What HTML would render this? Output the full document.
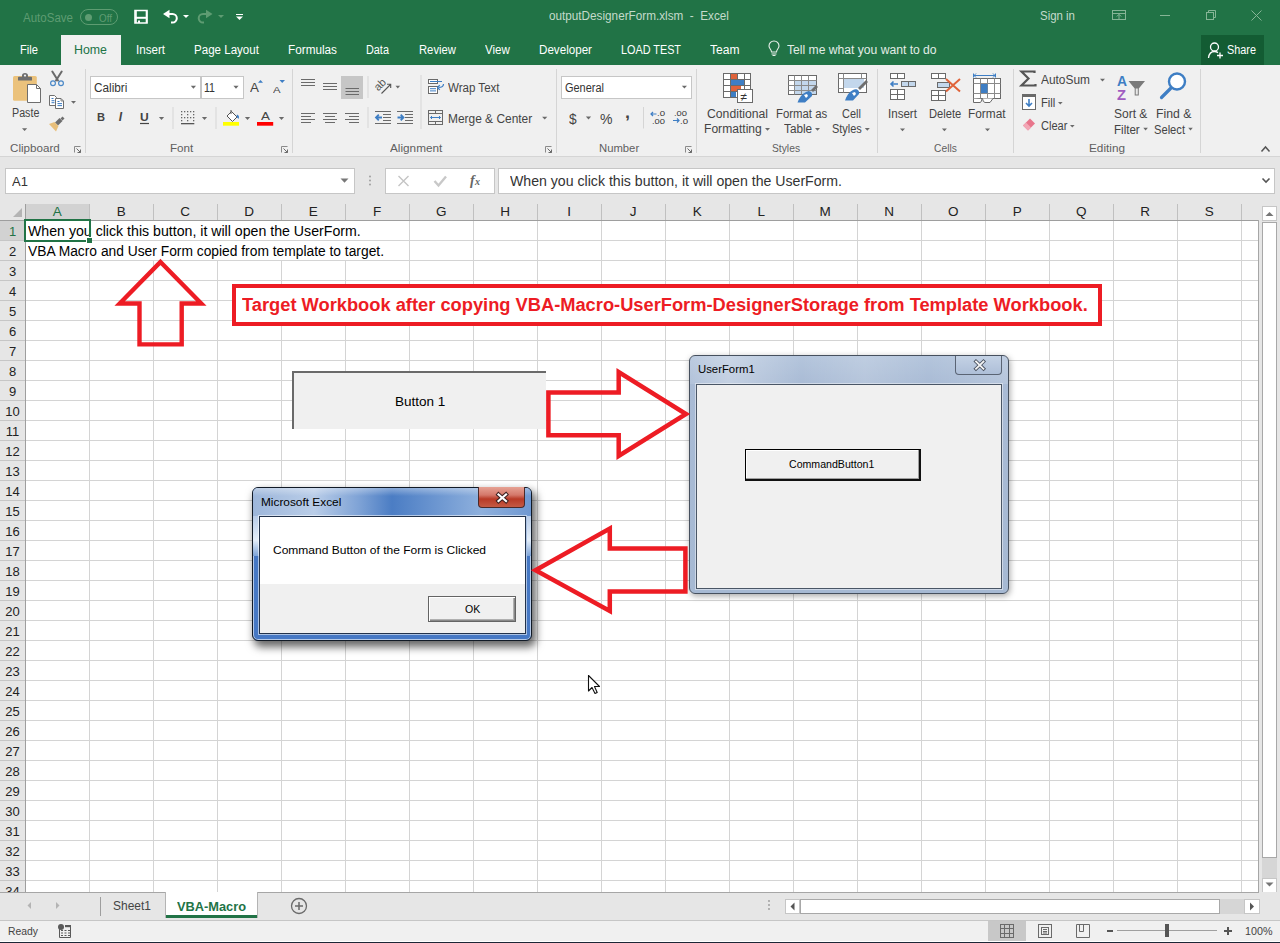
<!DOCTYPE html>
<html><head><meta charset="utf-8"><style>
*{margin:0;padding:0;box-sizing:border-box}
html,body{width:1280px;height:943px;overflow:hidden;background:#fff;font-family:"Liberation Sans",sans-serif;position:relative}
.a{position:absolute}
svg.a{overflow:visible}
.t{position:absolute;white-space:pre;line-height:1}
</style></head><body>
<div class="a" style="left:0px;top:0px;width:1280px;height:65px;background:#217346;"></div>
<div class="a" style="left:0px;top:65px;width:1280px;height:92px;background:#f0f0f0;"></div>
<div class="a" style="left:0px;top:156px;width:1280px;height:1px;background:#d5d5d5;"></div>
<div class="a" style="left:0px;top:157px;width:1280px;height:47px;background:#e6e6e6;"></div>
<div class="t" style="left:23.00px;top:11.84px;font-size:12px;color:#5e9c72;transform:scaleX(0.9601);transform-origin:0 0;">AutoSave</div>
<div class="a" style="left:80px;top:9px;width:38px;height:16px;border:1px solid #5e9c72;border-radius:8px;"></div>
<div class="a" style="left:84.5px;top:13.5px;width:7px;height:7px;background:#5e9c72;border-radius:50%;"></div>
<div class="t" style="left:99.00px;top:12.69px;font-size:11px;color:#5e9c72;transform:scaleX(0.8953);transform-origin:0 0;">Off</div>
<svg class="a" style="left:0px;top:0px;" width="1280" height="35" viewBox="0 0 1280 35">
 <g fill="none" stroke="#fff">
  <path d="M135 10.5 H147 V23 H135 Z" stroke-width="1.6"/>
  <path d="M135 17.8 H147" stroke-width="2"/>
  <path d="M136 11 V23 M146.5 11 V23" stroke-width="1.6"/>
  <path d="M139 20.5 V23" stroke-width="2"/>
  <path d="M168.5 14 H172.5 A4.3 4.3 0 0 1 172.5 22.6 H171" stroke-width="2"/>
 </g>
 <path d="M163 14 L169.5 9.8 L169.5 18.2 Z" fill="#fff"/>
 <path d="M183 15 H189 L186 18 Z" fill="#fff"/>
 <g fill="none" stroke="#5e9c72" stroke-width="2">
  <path d="M207 14 H203 A4.3 4.3 0 0 0 203 22.6 H204"/>
 </g>
 <path d="M212.5 14 L206 9.8 L206 18.2 Z" fill="#5e9c72"/>
 <path d="M218 15 H224 L221 18 Z" fill="#5e9c72"/>
 <path d="M236 14.5 H243" stroke="#fff" stroke-width="1"/>
 <path d="M236 16.5 H243 L239.5 20 Z" fill="#fff"/>
 <g fill="none" stroke="#86b596" stroke-width="1">
  <rect x="1112.5" y="10.5" width="13" height="9"/>
  <path d="M1112.5 13.5 H1125.5 M1119 19 V14.5 M1116.8 16.5 L1119 14.3 L1121.2 16.5"/>
  <path d="M1160 15.5 H1170"/>
  <rect x="1206.5" y="12.5" width="7" height="7"/>
  <path d="M1208.5 12.5 V10.5 H1215.5 V17.5 H1213.5"/>
  <path d="M1251.5 10.5 L1261.5 20.5 M1261.5 10.5 L1251.5 20.5"/>
 </g></svg>
<div class="t" style="left:549.00px;top:9.84px;font-size:12px;color:#c4dbcb;transform:scaleX(0.9778);transform-origin:0 0;">outputDesignerForm.xlsm  -  Excel</div>
<div class="t" style="left:1040.00px;top:10.14px;font-size:12px;color:#c4dbcb;transform:scaleX(0.9532);transform-origin:0 0;">Sign in</div>
<div class="a" style="left:61px;top:35px;width:60px;height:30px;background:#f0f0f0;"></div>
<div class="t" style="left:20.00px;top:44.24px;font-size:12px;color:#fff;transform:scaleX(0.9317);transform-origin:0 0;">File</div>
<div class="t" style="left:74.00px;top:44.24px;font-size:12px;color:#217346;transform:scaleX(1.0300);transform-origin:0 0;">Home</div>
<div class="t" style="left:136.00px;top:44.24px;font-size:12px;color:#fff;transform:scaleX(0.9667);transform-origin:0 0;">Insert</div>
<div class="t" style="left:194.00px;top:44.24px;font-size:12px;color:#fff;transform:scaleX(0.9638);transform-origin:0 0;">Page Layout</div>
<div class="t" style="left:288.00px;top:44.24px;font-size:12px;color:#fff;transform:scaleX(0.9792);transform-origin:0 0;">Formulas</div>
<div class="t" style="left:366.00px;top:44.24px;font-size:12px;color:#fff;transform:scaleX(0.9041);transform-origin:0 0;">Data</div>
<div class="t" style="left:419.00px;top:44.24px;font-size:12px;color:#fff;transform:scaleX(0.9372);transform-origin:0 0;">Review</div>
<div class="t" style="left:485.00px;top:44.24px;font-size:12px;color:#fff;transform:scaleX(0.9645);transform-origin:0 0;">View</div>
<div class="t" style="left:539.00px;top:44.24px;font-size:12px;color:#fff;transform:scaleX(0.9686);transform-origin:0 0;">Developer</div>
<div class="t" style="left:621.00px;top:44.24px;font-size:12px;color:#fff;transform:scaleX(0.9025);transform-origin:0 0;">LOAD TEST</div>
<div class="t" style="left:710.00px;top:44.24px;font-size:12px;color:#fff;transform:scaleX(1.0068);transform-origin:0 0;">Team</div>
<svg class="a" style="left:766px;top:40px;" width="16" height="18" viewBox="766 40 16 18"><g fill="none" stroke="#e8f0ea" stroke-width="1.1"><path d="M771.5 52 C771.5 49.5 769 48.5 769 46 A5 5 0 0 1 779 46 C779 48.5 776.5 49.5 776.5 52 Z"/><path d="M771.5 54 H776.5 M772.5 55.5 H775.5"/></g></svg>
<div class="t" style="left:787.00px;top:44.24px;font-size:12px;color:#e3ede6;transform:scaleX(1.0103);transform-origin:0 0;">Tell me what you want to do</div>
<div class="a" style="left:1201px;top:35px;width:63px;height:30px;background:#135c33;"></div>
<svg class="a" style="left:1206px;top:41px;" width="20" height="20" viewBox="1206 41 20 20"><g fill="none" stroke="#fff" stroke-width="1.3"><circle cx="1214.5" cy="47" r="4"/><path d="M1208.5 58 C1209 53.5 1211.5 51.5 1214.5 51.5 C1216 51.5 1217 52 1218 52.6"/><path d="M1220 52.5 V58.5 M1217 55.5 H1223"/></g></svg>
<div class="t" style="left:1227.00px;top:44.24px;font-size:12px;color:#fff;transform:scaleX(0.9051);transform-origin:0 0;">Share</div>
<div class="a" style="left:85px;top:69px;width:1px;height:84px;background:#d5d5d5;"></div>
<div class="a" style="left:292px;top:69px;width:1px;height:84px;background:#d5d5d5;"></div>
<div class="a" style="left:556px;top:69px;width:1px;height:84px;background:#d5d5d5;"></div>
<div class="a" style="left:696px;top:69px;width:1px;height:84px;background:#d5d5d5;"></div>
<div class="a" style="left:877px;top:69px;width:1px;height:84px;background:#d5d5d5;"></div>
<div class="a" style="left:1013px;top:69px;width:1px;height:84px;background:#d5d5d5;"></div>
<div class="a" style="left:1200px;top:69px;width:1px;height:84px;background:#d5d5d5;"></div>
<div class="t" style="left:9.80px;top:142.97px;font-size:11.5px;color:#5f5f5f;transform:scaleX(1.0098);transform-origin:0 0;">Clipboard</div>
<div class="t" style="left:169.50px;top:142.97px;font-size:11.5px;color:#5f5f5f;transform:scaleX(1.0130);transform-origin:0 0;">Font</div>
<div class="t" style="left:390.20px;top:142.97px;font-size:11.5px;color:#5f5f5f;transform:scaleX(1.0220);transform-origin:0 0;">Alignment</div>
<div class="t" style="left:598.60px;top:142.97px;font-size:11.5px;color:#5f5f5f;transform:scaleX(0.9819);transform-origin:0 0;">Number</div>
<div class="t" style="left:772.30px;top:142.97px;font-size:11.5px;color:#5f5f5f;transform:scaleX(0.8951);transform-origin:0 0;">Styles</div>
<div class="t" style="left:933.70px;top:142.97px;font-size:11.5px;color:#5f5f5f;transform:scaleX(0.8931);transform-origin:0 0;">Cells</div>
<div class="t" style="left:1088.50px;top:142.97px;font-size:11.5px;color:#5f5f5f;transform:scaleX(1.0230);transform-origin:0 0;">Editing</div>
<svg class="a" style="left:0px;top:140px;" width="1280" height="16" viewBox="0 140 1280 16"><path d="M74.5 152.5 V146.5 H80.5" fill="none" stroke="#8a8a8a" stroke-width="1"/><path d="M76.5 148.5 L80.5 152.5 M80.5 149.5 V152.5 H77.5" fill="none" stroke="#6a6a6a" stroke-width="1"/><path d="M281.5 152.5 V146.5 H287.5" fill="none" stroke="#8a8a8a" stroke-width="1"/><path d="M283.5 148.5 L287.5 152.5 M287.5 149.5 V152.5 H284.5" fill="none" stroke="#6a6a6a" stroke-width="1"/><path d="M545.5 152.5 V146.5 H551.5" fill="none" stroke="#8a8a8a" stroke-width="1"/><path d="M547.5 148.5 L551.5 152.5 M551.5 149.5 V152.5 H548.5" fill="none" stroke="#6a6a6a" stroke-width="1"/><path d="M685.5 152.5 V146.5 H691.5" fill="none" stroke="#8a8a8a" stroke-width="1"/><path d="M687.5 148.5 L691.5 152.5 M691.5 149.5 V152.5 H688.5" fill="none" stroke="#6a6a6a" stroke-width="1"/></svg>
<svg class="a" style="left:10px;top:70px;" width="70" height="65" viewBox="10 70 70 65">
 <rect x="13" y="76" width="23.8" height="24.8" rx="1.5" fill="#ebc27c"/>
 <path d="M18 80.5 V77.5 Q18 76.8 19 76.8 H22 V75.5 A3 2.6 0 0 1 28 75.5 V76.8 H31 Q32 76.8 32 77.5 V80.5 Z" fill="#6e6e6e"/><circle cx="25" cy="75.6" r="1.1" fill="#f0f0f0"/>
 <path d="M27.5 84.5 H36.5 L40.5 88.5 V102.5 H27.5 Z" fill="#fff" stroke="#6e6e6e" stroke-width="1"/>
 <path d="M36.5 84.5 V88.5 H40.5" fill="none" stroke="#6e6e6e" stroke-width="1"/>
 <path d="M22.0 128.2 H27.200000000000003 L24.6 131.1 Z" fill="#6a6a6a"/>
 <path d="M52.3 71.5 L58 80.5 M61.7 71.5 L56 80.5" stroke="#6a6a6a" stroke-width="2" stroke-linecap="round"/>
 <g fill="none" stroke="#4a88c7" stroke-width="1.2"><circle cx="53" cy="83.2" r="2.4"/><circle cx="61" cy="83.2" r="2.4"/></g>
 <path d="M49.5 95.5 H54.5 L56.5 97.5 V105.5 H49.5 Z" fill="#fff" stroke="#6e6e6e"/>
 <path d="M55.5 98.5 H61 L63.5 101 V108.5 H55.5 Z" fill="#fff" stroke="#6e6e6e"/>
 <path d="M61 98.5 V101 H63.5" fill="none" stroke="#6e6e6e" stroke-width="0.8"/>
 <path d="M51.5 98.5 H53.5 M51.5 100.7 H54.5 M51.5 102.7 H54.5 M57.5 101.5 H59.5 M57.5 103.6 H62 M57.5 105.6 H62" stroke="#3c7bc2" stroke-width="1"/>
 <path d="M71.0 101 H76.0 L73.5 103.8 Z" fill="#6a6a6a"/>
 <path d="M60.5 118.5 L62.5 116.5 L64.5 118.5 L62.5 120.5 Z" fill="#6e6e6e"/>
 <path d="M55 122.5 L59.5 118 L62.5 121 L58 125.5 Z" fill="#6e6e6e"/>
 <path d="M49 124 L54.5 122 L58.5 126 L56 131.5 Z" fill="#e8bf7a"/>
</svg>
<div class="t" style="left:11.60px;top:107.44px;font-size:12px;color:#444;transform:scaleX(0.8919);transform-origin:0 0;">Paste</div>
<div class="a" style="left:90px;top:76px;width:111px;height:23px;background:#fff;border:1px solid #c6c6c6;"></div>
<div class="a" style="left:201px;top:76px;width:43px;height:23px;background:#fff;border:1px solid #c6c6c6;"></div>
<div class="t" style="left:93.50px;top:81.54px;font-size:12px;color:#333;transform:scaleX(0.9806);transform-origin:0 0;">Calibri</div>
<div class="t" style="left:203.60px;top:81.54px;font-size:12px;color:#333;transform:scaleX(0.8814);transform-origin:0 0;">11</div>
<div class="t" style="left:250.00px;top:82.32px;font-size:12.5px;color:#444;transform:scaleX(1.0746);transform-origin:0 0;">A</div>
<div class="t" style="left:273.00px;top:84.86px;font-size:9.5px;color:#444;transform:scaleX(1.1940);transform-origin:0 0;">A</div>
<div class="t" style="left:96.50px;top:112.29px;font-size:11px;color:#444;font-weight:700;transform:scaleX(1.0101);transform-origin:0 0;">B</div>
<div class="t" style="left:118.80px;top:111.44px;font-size:12px;color:#444;font-weight:700;font-style:italic;">I</div>
<div class="t" style="left:140.00px;top:112.29px;font-size:11px;color:#444;font-weight:700;transform:scaleX(1.0985);transform-origin:0 0;">U</div>
<svg class="a" style="left:85px;top:70px;" width="210" height="60" viewBox="85 70 210 60">
 <path d="M190.8 85.8 H196.0 L193.4 88.69999999999999 Z" fill="#6a6a6a"/> <path d="M233.4 85.8 H238.6 L236 88.69999999999999 Z" fill="#6a6a6a"/>
 <path d="M258 82.7 L260.5 80 L263 82.7 Z" fill="#3e7ec4"/>
 <path d="M279.5 80 H285 L282.2 83 Z" fill="#3e7ec4"/>
 <path d="M140 123.5 H149" stroke="#444" stroke-width="1.2"/>
 <path d="M158.9 117 H164.1 L161.5 119.89999999999999 Z" fill="#6a6a6a"/> <path d="M201.9 117 H207.1 L204.5 119.89999999999999 Z" fill="#6a6a6a"/> <path d="M244.9 117 H250.1 L247.5 119.89999999999999 Z" fill="#6a6a6a"/> <path d="M278.9 117 H284.1 L281.5 119.89999999999999 Z" fill="#6a6a6a"/>
 <rect x="172.5" y="107" width="1" height="22" fill="#d5d5d5"/>
 <rect x="215.5" y="107" width="1" height="22" fill="#d5d5d5"/>
 <g fill="#666"><rect x="181" y="111" width="1.3" height="1.3"/><rect x="181" y="114" width="1.3" height="1.3"/><rect x="181" y="117" width="1.3" height="1.3"/><rect x="181" y="120" width="1.3" height="1.3"/><rect x="184" y="111" width="1.3" height="1.3"/><rect x="184" y="117" width="1.3" height="1.3"/><rect x="187" y="111" width="1.3" height="1.3"/><rect x="187" y="114" width="1.3" height="1.3"/><rect x="187" y="117" width="1.3" height="1.3"/><rect x="187" y="120" width="1.3" height="1.3"/><rect x="190" y="111" width="1.3" height="1.3"/><rect x="190" y="117" width="1.3" height="1.3"/><rect x="193" y="111" width="1.3" height="1.3"/><rect x="193" y="114" width="1.3" height="1.3"/><rect x="193" y="117" width="1.3" height="1.3"/><rect x="193" y="120" width="1.3" height="1.3"/></g>
 <rect x="181" y="123" width="13.3" height="1.3" fill="#555"/>
 <path d="M227 116 L231.5 111.5 L237 117 L232.5 121.5 Z" fill="#fff" stroke="#555" stroke-width="1"/>
 <path d="M231 110 V114" stroke="#555" stroke-width="1"/>
 <path d="M237 114.5 C239 115 239.5 117 238.5 119 C237.8 118 236.8 117.5 236.5 116.5 Z" fill="#3e7ec4"/>
 <rect x="223" y="122" width="16" height="3.7" fill="#ffff00"/>
 <rect x="257" y="122" width="16.2" height="3.7" fill="#ff0000"/>
</svg>
<div class="t" style="left:260.60px;top:111.07px;font-size:11.5px;color:#444;transform:scaleX(1.1681);transform-origin:0 0;">A</div>
<div class="a" style="left:341px;top:76px;width:22px;height:23px;background:#c6c6c6;"></div>
<svg class="a" style="left:295px;top:70px;" width="265" height="60" viewBox="295 70 265 60"><g stroke="#6a6a6a" stroke-width="1"><path d="M301 79.5 H315"/><path d="M301 82.5 H315"/><path d="M301 85.5 H315"/><path d="M323 83.5 H337"/><path d="M323 86.5 H337"/><path d="M323 89.5 H337"/><path d="M345.5 88.5 H359"/><path d="M345.5 91.5 H359"/><path d="M345.5 94.5 H359"/><path d="M301 113.5 H315"/><path d="M323.0 113.5 H337.0"/><path d="M345 113.5 H359"/><path d="M301 116.5 H311"/><path d="M325.0 116.5 H335.0"/><path d="M349 116.5 H359"/><path d="M301 119.5 H315"/><path d="M323.0 119.5 H337.0"/><path d="M345 119.5 H359"/><path d="M301 122.5 H311"/><path d="M325.0 122.5 H335.0"/><path d="M349 122.5 H359"/><path d="M375 111.5 H391"/><path d="M397 111.5 H413"/><path d="M383 114.5 H391"/><path d="M405 114.5 H413"/><path d="M383 117.5 H391"/><path d="M405 117.5 H413"/><path d="M383 120.5 H391"/><path d="M405 120.5 H413"/><path d="M375 123.5 H391"/><path d="M397 123.5 H413"/></g>
 <rect x="367.5" y="76" width="1" height="22" fill="#d5d5d5"/>
 <rect x="367.5" y="107" width="1" height="21" fill="#d5d5d5"/>
 <rect x="420.5" y="75" width="1" height="54" fill="#d5d5d5"/>
 <path d="M376 117.5 H382 M378.8 114.7 L376 117.5 L378.8 120.3" fill="none" stroke="#3e7ec4" stroke-width="1.8"/>
 <path d="M397.5 117.5 H403.5 M400.7 114.7 L403.5 117.5 L400.7 120.3" fill="none" stroke="#3e7ec4" stroke-width="1.8"/>
 <path d="M381.5 93.5 L390.5 84.5 M387 84.3 H390.7 V88" fill="none" stroke="#555" stroke-width="1.1"/>
 <text x="0" y="0" text-anchor="middle" font-size="11" fill="#555" transform="translate(382.6 87.2) rotate(-45)" font-family="Liberation Sans">ab</text>
 <path d="M395.5 85.8 H400.1 L397.8 88.39999999999999 Z" fill="#6a6a6a"/>
 <g fill="#fff" stroke="#6a6a6a" stroke-width="1"><rect x="428.5" y="79.5" width="9" height="4"/><rect x="428.5" y="86.5" width="9" height="7"/></g>
 <path d="M430 81.5 H442 M430 88.7 H436 M430 90.9 H436" stroke="#3e7ec4" stroke-width="1"/>
 <path d="M443.5 84 Q443.5 87.5 438.5 87.5" fill="none" stroke="#3e7ec4" stroke-width="1.2"/>
 <path d="M437.3 87.5 L439.8 85.2 M437.3 87.5 L439.8 89.8" fill="none" stroke="#3e7ec4" stroke-width="1.2"/>
 <g fill="none" stroke="#6a6a6a" stroke-width="1"><rect x="428.5" y="110.5" width="14" height="14"/><path d="M428.5 113.5 H442.5 M428.5 121.5 H442.5 M435.5 110.5 V113.5 M435.5 121.5 V124.5"/></g>
 <path d="M430.5 117.5 H440.5 M432 116 L430.5 117.5 L432 119 M439 116 L440.5 117.5 L439 119" fill="none" stroke="#3e7ec4" stroke-width="1"/>
 <path d="M542.1 116.7 H547.3000000000001 L544.7 119.6 Z" fill="#6a6a6a"/>
</svg>
<div class="t" style="left:447.80px;top:82.24px;font-size:12px;color:#444;transform:scaleX(0.9620);transform-origin:0 0;">Wrap Text</div>
<div class="t" style="left:447.80px;top:112.84px;font-size:12px;color:#444;transform:scaleX(0.9939);transform-origin:0 0;">Merge &amp; Center</div>
<div class="a" style="left:561px;top:76px;width:131px;height:23px;background:#fff;border:1px solid #c6c6c6;"></div>
<div class="t" style="left:564.60px;top:81.64px;font-size:12px;color:#333;transform:scaleX(0.9129);transform-origin:0 0;">General</div>
<svg class="a" style="left:560px;top:80px;" width="140" height="50" viewBox="560 80 140 50">
 <path d="M681.8 85.7 H687.0 L684.4 88.6 Z" fill="#6a6a6a"/> <path d="M585.9 116.5 H591.1 L588.5 119.39999999999999 Z" fill="#6a6a6a"/>
 <rect x="643" y="107" width="1" height="21.5" fill="#d5d5d5"/>
 <path d="M651 114 H656.5 M653 112 L651 114 L653 116" fill="none" stroke="#3e7ec4" stroke-width="1.2"/>
 <path d="M673 120.5 H679 M677 118.5 L679 120.5 L677 122.5" fill="none" stroke="#3e7ec4" stroke-width="1.2"/>
</svg>
<div class="t" style="left:568.60px;top:110.80px;font-size:15px;color:#444;transform:scaleX(0.9167);transform-origin:0 0;">$</div>
<div class="t" style="left:600.30px;top:111.20px;font-size:15px;color:#444;transform:scaleX(0.9363);transform-origin:0 0;">%</div>
<div class="t" style="left:625.00px;top:105.46px;font-size:16px;color:#444;font-weight:700;transform:scaleX(1.1161);transform-origin:0 0;">,</div>
<div class="t" style="left:657.00px;top:109.65px;font-size:7.5px;color:#333;transform:scaleX(1.2851);transform-origin:0 0;">.0</div>
<div class="t" style="left:652.00px;top:117.55px;font-size:7.5px;color:#333;transform:scaleX(1.2470);transform-origin:0 0;">.00</div>
<div class="t" style="left:674.00px;top:109.65px;font-size:7.5px;color:#333;transform:scaleX(1.2470);transform-origin:0 0;">.00</div>
<div class="t" style="left:679.50px;top:117.55px;font-size:7.5px;color:#333;transform:scaleX(1.2851);transform-origin:0 0;">.0</div>
<svg class="a" style="left:700px;top:70px;" width="180" height="65" viewBox="700 70 180 65"><g fill="none" stroke="#6a6a6a" stroke-width="1"><rect x="723.5" y="73.5" width="27" height="24" fill="#fff"/><path d="M730.5 73.5 V97.5"/><path d="M737.5 73.5 V97.5"/><path d="M744.5 73.5 V97.5"/><path d="M723.5 79.5 H750.5"/><path d="M723.5 85.5 H750.5"/><path d="M723.5 91.5 H750.5"/></g><rect x="731" y="74" width="6" height="5" fill="#e0633a"/><rect x="731" y="80" width="13" height="5" fill="#3e7ec4"/><rect x="731" y="86" width="10" height="5" fill="#e0633a"/><rect x="731" y="92" width="5" height="5" fill="#3e7ec4"/><rect x="737.5" y="89.5" width="15" height="13" fill="#fff" stroke="#6a6a6a"/><text x="740.5" y="100.5" font-size="12" fill="#333" font-family="Liberation Sans">≠</text><rect x="788.5" y="75.5" width="28" height="19" fill="#fff" stroke="#6a6a6a"/><rect x="794" y="80" width="22" height="14" fill="#c3d7ec"/><g stroke="#8a8a8a" stroke-width="1"><path d="M794.5 75.5 V94.5"/><path d="M801.5 75.5 V94.5"/><path d="M808.5 75.5 V94.5"/><path d="M788.5 80.5 H816.5"/><path d="M788.5 85.5 H816.5"/><path d="M788.5 90.5 H816.5"/></g><path d="M811 90 L816 85 L818 87 L813 92 Z" fill="#6e6e6e"/><path d="M806 92 C809 90 813 92 812 96 L805 102.5 L797.5 102.5 C799 98 802 94 806 92 Z" fill="#3e7ec4"/><path d="M804 95 L807 94 L808 96 L806 98 Z" fill="#fff"/><rect x="838.5" y="73.5" width="28" height="19" fill="#fff" stroke="#6a6a6a"/><rect x="844" y="78" width="20" height="10" fill="#c3d7ec"/><g stroke="#8a8a8a" stroke-width="1"><path d="M843.5 73.5 V92.5 M861.5 73.5 V78 M838.5 78.5 H866.5 M838.5 88.5 H843.5"/></g><path d="M858 88 L866 80 L868 82 L860 90 Z" fill="#6e6e6e"/><path d="M853 90 C856 88 860 90 859 94 L853 100.5 L845 100.5 C846.5 96 849 92 853 90 Z" fill="#3e7ec4"/><path d="M852 93 L855 92 L856 94 L854 96 Z" fill="#fff"/><path d="M765.0 127.9 H770.0 L767.5 130.70000000000002 Z" fill="#6a6a6a"/><path d="M815.0 127.9 H820.0 L817.5 130.70000000000002 Z" fill="#6a6a6a"/><path d="M864.8 127.9 H869.8 L867.3 130.70000000000002 Z" fill="#6a6a6a"/></svg>
<div class="t" style="left:706.60px;top:107.54px;font-size:12px;color:#444;transform:scaleX(1.0167);transform-origin:0 0;">Conditional</div>
<div class="t" style="left:703.70px;top:123.44px;font-size:12px;color:#444;transform:scaleX(1.0077);transform-origin:0 0;">Formatting</div>
<div class="t" style="left:775.60px;top:107.54px;font-size:12px;color:#444;transform:scaleX(0.9481);transform-origin:0 0;">Format as</div>
<div class="t" style="left:783.90px;top:123.44px;font-size:12px;color:#444;transform:scaleX(0.9798);transform-origin:0 0;">Table</div>
<div class="t" style="left:841.70px;top:107.54px;font-size:12px;color:#444;transform:scaleX(0.9109);transform-origin:0 0;">Cell</div>
<div class="t" style="left:832.30px;top:123.44px;font-size:12px;color:#444;transform:scaleX(0.9099);transform-origin:0 0;">Styles</div>
<svg class="a" style="left:880px;top:70px;" width="135" height="65" viewBox="880 70 135 65"><g fill="#fff" stroke="#6a6a6a" stroke-width="1"><rect x="890.5" y="73.5" width="14" height="5"/><path d="M897.5 73.5 V78.5"/><rect x="890.5" y="89.5" width="14" height="10"/><path d="M897.5 89.5 V99.5 M890.5 94.5 H904.5"/></g><rect x="901.5" y="81.5" width="14" height="5" fill="#c3d7ec" stroke="#6a6a6a"/><path d="M908.5 81.5 V86.5" stroke="#6a6a6a"/><path d="M891 84 H898 M893.5 81.5 L891 84 L893.5 86.5" fill="none" stroke="#3e7ec4" stroke-width="1.6"/><g fill="#fff" stroke="#6a6a6a" stroke-width="1"><rect x="931.5" y="73.5" width="14" height="5"/><path d="M938.5 73.5 V78.5"/><rect x="931.5" y="90.5" width="14" height="10"/><path d="M938.5 90.5 V100.5 M931.5 95.5 H945.5"/></g><rect x="937.5" y="82.5" width="12" height="5" fill="#c3d7ec" stroke="#6a6a6a"/><path d="M946 79 L960 91.5 M960 79 L946 91.5" stroke="#e0633a" stroke-width="2"/><path d="M973.5 73.5 V77.5 M995.5 73.5 V77.5 M974 75.5 H995 M976 73.5 L974 75.5 L976 77.5 M993 73.5 L995 75.5 L993 77.5" fill="none" stroke="#3e7ec4" stroke-width="1"/><rect x="973.5" y="78.5" width="27" height="20" fill="#fff" stroke="#6a6a6a"/><g stroke="#8a8a8a"><path d="M980.5 78.5 V98.5 M987.5 78.5 V98.5 M994.5 78.5 V98.5 M973.5 83.5 H1000.5 M973.5 93.5 H1000.5"/></g><rect x="981" y="84" width="6.5" height="9" fill="#3e7ec4"/><path d="M973.5 98.5 V102.5 H980 Q981.5 102.5 982 99" fill="#fff" stroke="#6a6a6a"/><path d="M982.5 98.5 Q983 102.5 985 102.5 H990 L993 98.5" fill="#fff" stroke="#6a6a6a"/><path d="M900.0 128.4 H905.0 L902.5 131.20000000000002 Z" fill="#6a6a6a"/><path d="M941.9 128.4 H946.9 L944.4 131.20000000000002 Z" fill="#6a6a6a"/><path d="M985.0 128.4 H990.0 L987.5 131.20000000000002 Z" fill="#6a6a6a"/></svg>
<div class="t" style="left:888.00px;top:107.74px;font-size:12px;color:#444;transform:scaleX(0.9633);transform-origin:0 0;">Insert</div>
<div class="t" style="left:928.80px;top:107.74px;font-size:12px;color:#444;transform:scaleX(0.9285);transform-origin:0 0;">Delete</div>
<div class="t" style="left:968.40px;top:107.74px;font-size:12px;color:#444;transform:scaleX(0.9884);transform-origin:0 0;">Format</div>
<svg class="a" style="left:1015px;top:65px;" width="265" height="90" viewBox="1015 65 265 90"><path d="M1034.5 73 V71.5 H1021.5 L1028.5 78.5 L1021.5 85.5 H1035.5 V84" fill="none" stroke="#555" stroke-width="2.2"/><rect x="1022.5" y="94.5" width="13" height="15" fill="#fff" stroke="#6a6a6a"/><rect x="1022" y="94" width="14" height="3" fill="#6a6a6a"/><path d="M1029 99 V106 M1026 103 L1029 106 L1032 103" fill="none" stroke="#3e7ec4" stroke-width="1.6"/><path d="M1030 118.5 L1035 123.5 L1028 130.5 L1023 125.5 Z" fill="#e8768c"/><path d="M1023 125.5 L1026 122.5 L1031 127.5 L1028 130.5 Z" fill="#f2a7b5"/><path d="M1128.5 81 H1145 L1138.8 88.5 V95.5 H1134.7 V88.5 Z" fill="#7a7a7a"/><path d="M1135.7 88.5 V94.5 H1137.8 V88.5" fill="#e8e8e8"/><circle cx="1177" cy="81.5" r="8" fill="#fff" stroke="#3e7ec4" stroke-width="2.4"/><path d="M1171 88 L1161.5 97.5" stroke="#3e7ec4" stroke-width="3.2" stroke-linecap="round"/><path d="M1261.5 151.5 L1265.5 147 L1269.5 151.5" fill="none" stroke="#555" stroke-width="1.5"/><path d="M1100.0 78.7 H1105.0 L1102.5 81.5 Z" fill="#6a6a6a"/><path d="M1058.0 102 H1062.6 L1060.3 104.6 Z" fill="#6a6a6a"/><path d="M1070.0 125 H1074.6 L1072.3 127.6 Z" fill="#6a6a6a"/><path d="M1143.3 127.8 H1147.8999999999999 L1145.6 130.4 Z" fill="#6a6a6a"/><path d="M1188.2 127.8 H1192.8 L1190.5 130.4 Z" fill="#6a6a6a"/></svg>
<div class="t" style="left:1040.60px;top:74.24px;font-size:12px;color:#444;transform:scaleX(0.9915);transform-origin:0 0;">AutoSum</div>
<div class="t" style="left:1040.60px;top:96.64px;font-size:12px;color:#444;transform:scaleX(0.9375);transform-origin:0 0;">Fill</div>
<div class="t" style="left:1040.60px;top:119.84px;font-size:12px;color:#444;transform:scaleX(0.9205);transform-origin:0 0;">Clear</div>
<div class="t" style="left:1116.50px;top:73.00px;font-size:15px;color:#3e7ec4;font-weight:700;transform:scaleX(0.9259);transform-origin:0 0;">A</div>
<div class="t" style="left:1117.00px;top:86.50px;font-size:15px;color:#a05cc0;font-weight:700;transform:scaleX(0.9836);transform-origin:0 0;">Z</div>
<div class="t" style="left:1114.00px;top:108.04px;font-size:12px;color:#444;">Sort &amp;</div>
<div class="t" style="left:1114.00px;top:124.04px;font-size:12px;color:#444;transform:scaleX(0.9647);transform-origin:0 0;">Filter</div>
<div class="t" style="left:1156.00px;top:108.04px;font-size:12px;color:#444;transform:scaleX(1.0208);transform-origin:0 0;">Find &amp;</div>
<div class="t" style="left:1154.00px;top:124.04px;font-size:12px;color:#444;transform:scaleX(0.9293);transform-origin:0 0;">Select</div>
<div class="a" style="left:5px;top:168px;width:350px;height:26px;background:#fff;border:1px solid #c6c6c6;"></div>
<div class="t" style="left:12.20px;top:175.64px;font-size:12px;color:#333;transform:scaleX(1.0792);transform-origin:0 0;">A1</div>
<div class="a" style="left:385px;top:168px;width:110px;height:26px;background:#fff;border:1px solid #c6c6c6;"></div>
<div class="a" style="left:498px;top:168px;width:777px;height:26px;background:#fff;border:1px solid #c6c6c6;"></div>
<div class="t" style="left:510.00px;top:174.35px;font-size:14px;color:#333;transform:scaleX(1.0087);transform-origin:0 0;">When you click this button, it will open the UserForm.</div>
<svg class="a" style="left:330px;top:170px;" width="950" height="25" viewBox="330 170 950 25"><path d="M340.5 178.5 H348.5 L344.5 182.8 Z" fill="#777"/>
 <circle cx="370" cy="176.5" r="0.9" fill="#999"/><circle cx="370" cy="180.5" r="0.9" fill="#999"/><circle cx="370" cy="184.5" r="0.9" fill="#999"/>
 <path d="M398.5 176 L408.5 186 M408.5 176 L398.5 186" stroke="#c4c4c4" stroke-width="1.4"/>
 <path d="M434.5 181 L438.5 185.5 L446 176.5" fill="none" stroke="#c8c8c8" stroke-width="2.4"/>
 <path d="M1262.5 178.5 L1266 182 L1269.5 178.5" fill="none" stroke="#555" stroke-width="1.6"/>
</svg>
<svg class="a" style="left:465px;top:170px;" width="25" height="22" viewBox="465 170 25 22"><text x="470" y="185" font-family="Liberation Serif" font-style="italic" font-weight="700" font-size="14" fill="#666">f</text><text x="475" y="185" font-family="Liberation Serif" font-style="italic" font-weight="700" font-size="10" fill="#666">x</text></svg>
<div class="a" style="left:0px;top:204px;width:1258px;height:16px;background:#e6e6e6;"></div>
<div class="a" style="left:26px;top:204px;width:63px;height:16px;background:#d2d2d2;"></div>
<div class="a" style="left:0px;top:220px;width:1258px;height:1px;background:#9e9e9e;"></div>
<div class="t" style="left:52.70px;top:205.37px;font-size:13.5px;color:#217346;">A</div>
<div class="a" style="left:89px;top:204px;width:1px;height:16px;background:#c0c0c0;"></div>
<div class="t" style="left:116.70px;top:205.37px;font-size:13.5px;color:#222;">B</div>
<div class="a" style="left:153px;top:204px;width:1px;height:16px;background:#c0c0c0;"></div>
<div class="t" style="left:180.30px;top:205.37px;font-size:13.5px;color:#222;">C</div>
<div class="a" style="left:217px;top:204px;width:1px;height:16px;background:#c0c0c0;"></div>
<div class="t" style="left:244.30px;top:205.37px;font-size:13.5px;color:#222;">D</div>
<div class="a" style="left:281px;top:204px;width:1px;height:16px;background:#c0c0c0;"></div>
<div class="t" style="left:308.70px;top:205.37px;font-size:13.5px;color:#222;">E</div>
<div class="a" style="left:345px;top:204px;width:1px;height:16px;background:#c0c0c0;"></div>
<div class="t" style="left:373.10px;top:205.37px;font-size:13.5px;color:#222;">F</div>
<div class="a" style="left:409px;top:204px;width:1px;height:16px;background:#c0c0c0;"></div>
<div class="t" style="left:435.95px;top:205.37px;font-size:13.5px;color:#222;">G</div>
<div class="a" style="left:473px;top:204px;width:1px;height:16px;background:#c0c0c0;"></div>
<div class="t" style="left:500.30px;top:205.37px;font-size:13.5px;color:#222;">H</div>
<div class="a" style="left:537px;top:204px;width:1px;height:16px;background:#c0c0c0;"></div>
<div class="t" style="left:567.30px;top:205.37px;font-size:13.5px;color:#222;">I</div>
<div class="a" style="left:601px;top:204px;width:1px;height:16px;background:#c0c0c0;"></div>
<div class="t" style="left:629.80px;top:205.37px;font-size:13.5px;color:#222;">J</div>
<div class="a" style="left:665px;top:204px;width:1px;height:16px;background:#c0c0c0;"></div>
<div class="t" style="left:692.70px;top:205.37px;font-size:13.5px;color:#222;">K</div>
<div class="a" style="left:729px;top:204px;width:1px;height:16px;background:#c0c0c0;"></div>
<div class="t" style="left:757.45px;top:205.37px;font-size:13.5px;color:#222;">L</div>
<div class="a" style="left:793px;top:204px;width:1px;height:16px;background:#c0c0c0;"></div>
<div class="t" style="left:819.60px;top:205.37px;font-size:13.5px;color:#222;">M</div>
<div class="a" style="left:857px;top:204px;width:1px;height:16px;background:#c0c0c0;"></div>
<div class="t" style="left:884.30px;top:205.37px;font-size:13.5px;color:#222;">N</div>
<div class="a" style="left:921px;top:204px;width:1px;height:16px;background:#c0c0c0;"></div>
<div class="t" style="left:947.95px;top:205.37px;font-size:13.5px;color:#222;">O</div>
<div class="a" style="left:985px;top:204px;width:1px;height:16px;background:#c0c0c0;"></div>
<div class="t" style="left:1012.70px;top:205.37px;font-size:13.5px;color:#222;">P</div>
<div class="a" style="left:1049px;top:204px;width:1px;height:16px;background:#c0c0c0;"></div>
<div class="t" style="left:1075.95px;top:205.37px;font-size:13.5px;color:#222;">Q</div>
<div class="a" style="left:1113px;top:204px;width:1px;height:16px;background:#c0c0c0;"></div>
<div class="t" style="left:1140.30px;top:205.37px;font-size:13.5px;color:#222;">R</div>
<div class="a" style="left:1177px;top:204px;width:1px;height:16px;background:#c0c0c0;"></div>
<div class="t" style="left:1204.70px;top:205.37px;font-size:13.5px;color:#222;">S</div>
<div class="a" style="left:1241px;top:204px;width:1px;height:16px;background:#c0c0c0;"></div>
<svg class="a" style="left:10px;top:205px;" width="15" height="15" viewBox="10 205 15 15"><path d="M22 208 V217 H13 Z" fill="#b4b4b4"/></svg>
<div class="a" style="left:0px;top:221px;width:25px;height:671px;background:#e6e6e6;"></div>
<div class="a" style="left:0px;top:221px;width:25px;height:19px;background:#d2d2d2;"></div>
<div class="a" style="left:25px;top:204px;width:1px;height:688px;background:#9e9e9e;"></div>
<svg class="a" style="left:0px;top:221px;overflow:hidden;" width="25" height="671" viewBox="0 221 25 671"><rect x="0" y="240" width="25" height="1" fill="#c6c6c6"/><rect x="0" y="260" width="25" height="1" fill="#c6c6c6"/><rect x="0" y="280" width="25" height="1" fill="#c6c6c6"/><rect x="0" y="300" width="25" height="1" fill="#c6c6c6"/><rect x="0" y="320" width="25" height="1" fill="#c6c6c6"/><rect x="0" y="340" width="25" height="1" fill="#c6c6c6"/><rect x="0" y="360" width="25" height="1" fill="#c6c6c6"/><rect x="0" y="380" width="25" height="1" fill="#c6c6c6"/><rect x="0" y="400" width="25" height="1" fill="#c6c6c6"/><rect x="0" y="420" width="25" height="1" fill="#c6c6c6"/><rect x="0" y="440" width="25" height="1" fill="#c6c6c6"/><rect x="0" y="460" width="25" height="1" fill="#c6c6c6"/><rect x="0" y="480" width="25" height="1" fill="#c6c6c6"/><rect x="0" y="500" width="25" height="1" fill="#c6c6c6"/><rect x="0" y="520" width="25" height="1" fill="#c6c6c6"/><rect x="0" y="540" width="25" height="1" fill="#c6c6c6"/><rect x="0" y="560" width="25" height="1" fill="#c6c6c6"/><rect x="0" y="580" width="25" height="1" fill="#c6c6c6"/><rect x="0" y="600" width="25" height="1" fill="#c6c6c6"/><rect x="0" y="620" width="25" height="1" fill="#c6c6c6"/><rect x="0" y="640" width="25" height="1" fill="#c6c6c6"/><rect x="0" y="660" width="25" height="1" fill="#c6c6c6"/><rect x="0" y="680" width="25" height="1" fill="#c6c6c6"/><rect x="0" y="700" width="25" height="1" fill="#c6c6c6"/><rect x="0" y="720" width="25" height="1" fill="#c6c6c6"/><rect x="0" y="740" width="25" height="1" fill="#c6c6c6"/><rect x="0" y="760" width="25" height="1" fill="#c6c6c6"/><rect x="0" y="780" width="25" height="1" fill="#c6c6c6"/><rect x="0" y="800" width="25" height="1" fill="#c6c6c6"/><rect x="0" y="820" width="25" height="1" fill="#c6c6c6"/><rect x="0" y="840" width="25" height="1" fill="#c6c6c6"/><rect x="0" y="860" width="25" height="1" fill="#c6c6c6"/><rect x="0" y="880" width="25" height="1" fill="#c6c6c6"/><rect x="0" y="900" width="25" height="1" fill="#c6c6c6"/></svg>
<div class="t" style="left:9.00px;top:224.90px;font-size:13px;color:#217346;">1</div>
<div class="t" style="left:9.00px;top:244.90px;font-size:13px;color:#222;">2</div>
<div class="t" style="left:9.00px;top:264.90px;font-size:13px;color:#222;">3</div>
<div class="t" style="left:9.00px;top:284.90px;font-size:13px;color:#222;">4</div>
<div class="t" style="left:9.00px;top:304.90px;font-size:13px;color:#222;">5</div>
<div class="t" style="left:9.00px;top:324.90px;font-size:13px;color:#222;">6</div>
<div class="t" style="left:9.00px;top:344.90px;font-size:13px;color:#222;">7</div>
<div class="t" style="left:9.00px;top:364.90px;font-size:13px;color:#222;">8</div>
<div class="t" style="left:9.00px;top:384.90px;font-size:13px;color:#222;">9</div>
<div class="t" style="left:5.35px;top:404.90px;font-size:13px;color:#222;">10</div>
<div class="t" style="left:5.85px;top:424.90px;font-size:13px;color:#222;">11</div>
<div class="t" style="left:5.35px;top:444.90px;font-size:13px;color:#222;">12</div>
<div class="t" style="left:5.35px;top:464.90px;font-size:13px;color:#222;">13</div>
<div class="t" style="left:5.35px;top:484.90px;font-size:13px;color:#222;">14</div>
<div class="t" style="left:5.35px;top:504.90px;font-size:13px;color:#222;">15</div>
<div class="t" style="left:5.35px;top:524.90px;font-size:13px;color:#222;">16</div>
<div class="t" style="left:5.35px;top:544.90px;font-size:13px;color:#222;">17</div>
<div class="t" style="left:5.35px;top:564.90px;font-size:13px;color:#222;">18</div>
<div class="t" style="left:5.35px;top:584.90px;font-size:13px;color:#222;">19</div>
<div class="t" style="left:5.35px;top:604.90px;font-size:13px;color:#222;">20</div>
<div class="t" style="left:5.35px;top:624.90px;font-size:13px;color:#222;">21</div>
<div class="t" style="left:5.35px;top:644.90px;font-size:13px;color:#222;">22</div>
<div class="t" style="left:5.35px;top:664.90px;font-size:13px;color:#222;">23</div>
<div class="t" style="left:5.35px;top:684.90px;font-size:13px;color:#222;">24</div>
<div class="t" style="left:5.35px;top:704.90px;font-size:13px;color:#222;">25</div>
<div class="t" style="left:5.35px;top:724.90px;font-size:13px;color:#222;">26</div>
<div class="t" style="left:5.35px;top:744.90px;font-size:13px;color:#222;">27</div>
<div class="t" style="left:5.35px;top:764.90px;font-size:13px;color:#222;">28</div>
<div class="t" style="left:5.35px;top:784.90px;font-size:13px;color:#222;">29</div>
<div class="t" style="left:5.35px;top:804.90px;font-size:13px;color:#222;">30</div>
<div class="t" style="left:5.35px;top:824.90px;font-size:13px;color:#222;">31</div>
<div class="t" style="left:5.35px;top:844.90px;font-size:13px;color:#222;">32</div>
<div class="t" style="left:5.35px;top:864.90px;font-size:13px;color:#222;">33</div>
<div class="t" style="left:5.35px;top:884.90px;font-size:13px;color:#222;">34</div>
<div class="a" style="left:26px;top:221px;width:1232px;height:671px;background-color:#fff;background-image:repeating-linear-gradient(to right,transparent 0,transparent 63px,#d4d4d4 63px,#d4d4d4 64px),repeating-linear-gradient(to bottom,transparent 0,transparent 19px,#d4d4d4 19px,#d4d4d4 20px)"></div>
<div class="a" style="left:27px;top:221px;width:382px;height:19px;background:#fff;"></div>
<div class="a" style="left:26px;top:241px;width:383px;height:19px;background:#fff;"></div>
<div class="t" style="left:28.30px;top:223.95px;font-size:14px;color:#000;transform:scaleX(1.0108);transform-origin:0 0;">When you click this button, it will open the UserForm.</div>
<div class="t" style="left:28.30px;top:243.95px;font-size:14px;color:#000;transform:scaleX(0.9860);transform-origin:0 0;">VBA Macro and User Form copied from template to target.</div>
<div class="a" style="left:24px;top:219px;width:67px;height:2px;background:#217346;"></div>
<div class="a" style="left:24px;top:219px;width:2px;height:23px;background:#217346;"></div>
<div class="a" style="left:89px;top:219px;width:2px;height:18px;background:#217346;"></div>
<div class="a" style="left:24px;top:240px;width:62px;height:2px;background:#217346;"></div>
<div class="a" style="left:87px;top:238px;width:5px;height:5px;background:#217346;"></div>
<div class="a" style="left:86px;top:237px;width:1px;height:7px;background:#fff;"></div>
<div class="a" style="left:86px;top:237px;width:7px;height:1px;background:#fff;"></div>
<div class="a" style="left:1258px;top:204px;width:22px;height:688px;background:#e6e6e6;"></div>
<div class="a" style="left:1262px;top:206px;width:15px;height:15px;background:#fff;border:1px solid #c6c6c6;"></div>
<svg class="a" style="left:1262px;top:206px;" width="15" height="15" viewBox="1262 206 15 15"><path d="M1265.5 216 H1273.5 L1269.5 212 Z" fill="#767676"/></svg>
<div class="a" style="left:1262px;top:222px;width:15px;height:636px;background:#fff;border:1px solid #a8a8a8;"></div>
<div class="a" style="left:1262px;top:858px;width:15px;height:20px;background:#d6d6d6;"></div>
<div class="a" style="left:1258px;top:220px;width:1px;height:673px;background:#a6a6a6;"></div>
<div class="a" style="left:1262px;top:878px;width:15px;height:15px;background:#fff;border:1px solid #c6c6c6;"></div>
<svg class="a" style="left:1262px;top:878px;" width="15" height="15" viewBox="1262 878 15 15"><path d="M1265.5 882.5 H1273.5 L1269.5 886.5 Z" fill="#767676"/></svg>
<div class="a" style="left:0px;top:892px;width:1280px;height:28px;background:#e6e6e6;"></div>
<div class="a" style="left:0px;top:892px;width:1259px;height:1px;background:#a6a6a6;"></div>
<svg class="a" style="left:20px;top:898px;" width="50" height="16" viewBox="20 898 50 16"><path d="M31 902 V909 L27.5 905.5 Z" fill="#b4b4b4"/><path d="M56 902 V909 L59.5 905.5 Z" fill="#b4b4b4"/></svg>
<div class="a" style="left:100px;top:897px;width:1px;height:19px;background:#9e9e9e;"></div>
<div class="t" style="left:113.00px;top:899.92px;font-size:12.5px;color:#444;transform:scaleX(0.9590);transform-origin:0 0;">Sheet1</div>
<div class="a" style="left:165px;top:892px;width:93px;height:26px;background:#fff;"></div>
<div class="a" style="left:165px;top:892px;width:1px;height:26px;background:#b4b4b4;"></div>
<div class="a" style="left:257px;top:892px;width:1px;height:26px;background:#b4b4b4;"></div>
<div class="a" style="left:166px;top:915px;width:91px;height:3px;background:#217346;"></div>
<div class="t" style="left:177.00px;top:899.50px;font-size:13px;color:#217346;font-weight:700;transform:scaleX(0.9847);transform-origin:0 0;">VBA-Macro</div>
<svg class="a" style="left:290px;top:897px;" width="18" height="18" viewBox="290 897 18 18"><circle cx="299" cy="906" r="7.5" fill="none" stroke="#6a6a6a" stroke-width="1.3"/><path d="M295 906 H303 M299 902 V910" stroke="#6a6a6a" stroke-width="1.5"/></svg>
<svg class="a" style="left:760px;top:898px;" width="520" height="18" viewBox="760 898 520 18"><circle cx="769" cy="901" r="0.9" fill="#999"/><circle cx="769" cy="905" r="0.9" fill="#999"/><circle cx="769" cy="909" r="0.9" fill="#999"/></svg>
<div class="a" style="left:785px;top:899px;width:15px;height:15px;background:#fff;border:1px solid #c6c6c6;"></div>
<div class="a" style="left:1219px;top:899px;width:26px;height:15px;background:#d6d6d6;"></div>
<div class="a" style="left:800px;top:899px;width:420px;height:15px;background:#fff;border:1px solid #a8a8a8;"></div>
<div class="a" style="left:1244px;top:899px;width:16px;height:15px;background:#fff;border:1px solid #c6c6c6;"></div>
<svg class="a" style="left:785px;top:899px;" width="480" height="15" viewBox="785 899 480 15"><path d="M794.5 902.5 V910.5 L790.5 906.5 Z" fill="#555"/><path d="M1250 902.5 V910.5 L1254 906.5 Z" fill="#555"/></svg>
<div class="a" style="left:0px;top:920px;width:1280px;height:21px;background:#f0f0f0;"></div>
<div class="a" style="left:0px;top:920px;width:1280px;height:1px;background:#c6c6c6;"></div>
<div class="t" style="left:7.50px;top:926.07px;font-size:11.5px;color:#444;transform:scaleX(0.9027);transform-origin:0 0;">Ready</div>
<svg class="a" style="left:56px;top:922px;" width="20" height="18" viewBox="56 922 20 18"><path d="M59.5 929 V937.5 H70.5 V925.5 H65" fill="none" stroke="#5a5a5a" stroke-width="1"/><rect x="65" y="925" width="6" height="2.2" fill="#5a5a5a"/><circle cx="61" cy="927" r="3" fill="#5a5a5a"/><path d="M61 930.5 H63 M64.5 930.5 H66.5 M68 930.5 H70 M61 933 H63 M64.5 933 H66.5 M68 933 H70 M61 935.5 H63 M64.5 935.5 H66.5 M68 935.5 H70" stroke="#5a5a5a" stroke-width="1"/></svg>
<div class="a" style="left:988px;top:921px;width:38px;height:20px;background:#c8c8c8;"></div>
<svg class="a" style="left:990px;top:922px;" width="290" height="20" viewBox="990 922 290 20">
 <g fill="none" stroke="#6a6a6a" stroke-width="1">
  <rect x="1000.5" y="924.5" width="13" height="13"/>
  <path d="M1004.5 924.5 V937.5 M1009.5 924.5 V937.5 M1000.5 928.5 H1013.5 M1000.5 933.5 H1013.5"/>
  <rect x="1038.5" y="924.5" width="13" height="13"/>
  <rect x="1041.5" y="927.5" width="7" height="7"/>
  <path d="M1043 929.5 H1047 M1043 931.5 H1047 M1043 933 H1047"/>
  <path d="M1076.5 937.5 V924.5 H1089.5 V937.5 H1076.5 M1079.5 924.5 V931.5 H1083.5 V924.5"/>
  <path d="M1117 930.5 H1217" stroke="#a0a0a0"/>
 </g>
 <rect x="1107" y="930" width="6" height="2" fill="#555"/>
 <rect x="1165" y="924" width="4" height="13" fill="#555"/>
 <path d="M1224 931 H1232 M1228 927 V935" stroke="#555" stroke-width="2"/>
</svg>
<div class="t" style="left:1245.00px;top:925.77px;font-size:11.5px;color:#444;transform:scaleX(0.9341);transform-origin:0 0;">100%</div>
<div class="a" style="left:0px;top:942px;width:1280px;height:1px;background:#1c2636;"></div>
<div class="a" style="left:292px;top:371px;width:254px;height:58px;background:#f0f0f0;"></div>
<div class="a" style="left:292px;top:371px;width:254px;height:2px;background:#6a6a6a;"></div>
<div class="a" style="left:292px;top:371px;width:2px;height:58px;background:#6a6a6a;"></div>
<div class="t" style="left:394.70px;top:395.84px;font-size:12px;color:#000;transform:scaleX(1.1268);transform-origin:0 0;">Button 1</div>
<div class="a" style="left:232px;top:284px;width:870px;height:42px;background:#fff;border:4.7px solid #ed1c24;"></div>
<div class="t" style="left:242.10px;top:295.66px;font-size:18px;color:#ed1c24;font-weight:700;transform:scaleX(1.0155);transform-origin:0 0;">Target Workbook after copying VBA-Macro-UserForm-DesignerStorage from Template Workbook.</div>
<div class="a" style="left:689px;top:355px;width:320px;height:239px;border:1px solid #46505e;border-radius:6px;background:linear-gradient(180deg,#b4c5dc 0%,#a9bbd5 12%,#a6b9d3 100%);box-shadow:1px 2px 6px rgba(0,0,0,0.35)"></div>
<div class="a" style="left:690px;top:356px;width:318px;height:28px;border-radius:5px 5px 0 0;background:linear-gradient(90deg,rgba(255,255,255,0.1),rgba(255,255,255,0.3) 12%,rgba(255,255,255,0.0) 35%,rgba(255,255,255,0.15) 55%,rgba(255,255,255,0.0) 75%,rgba(255,255,255,0.15))"></div>
<div class="a" style="left:696px;top:384px;width:306px;height:205px;background:#f0f0f0;border:1px solid #4a5666;"></div>
<div class="a" style="left:695px;top:383px;width:308px;height:207px;border:1px solid rgba(255,255,255,0.45);"></div>
<div class="a" style="left:955px;top:356px;width:47px;height:19px;border:1px solid #5a6474;border-top:none;border-radius:0 0 4px 4px;background:linear-gradient(180deg,#c4d2e5,#aebfd8)"></div>
<svg class="a" style="left:970px;top:356px;" width="20" height="18" viewBox="970 356 20 18"><path d="M976 361.5 L983.5 368.8 M983.5 361.5 L976 368.8" stroke="#4a5260" stroke-width="3.6" stroke-linecap="square"/><path d="M976 361.5 L983.5 368.8 M983.5 361.5 L976 368.8" stroke="#f4f4f4" stroke-width="1.8" stroke-linecap="square"/></svg>
<div class="t" style="left:697.60px;top:364.07px;font-size:11.5px;color:#000;transform:scaleX(0.9861);transform-origin:0 0;">UserForm1</div>
<div class="a" style="left:745px;top:449px;width:176px;height:32px;background:#f0f0f0;"></div>
<div class="a" style="left:745px;top:449px;width:176px;height:32px;border-top:1px solid #000;border-left:1px solid #000;border-right:2px solid #111;border-bottom:2px solid #111;box-shadow:inset -1px -1px 0 #a0a0a0, inset 1px 1px 0 #fff"></div>
<div class="t" style="left:789.40px;top:459.47px;font-size:11.5px;color:#000;transform:scaleX(0.9203);transform-origin:0 0;">CommandButton1</div>
<div class="a" style="left:252px;top:487px;width:280px;height:154px;border:1px solid #111a26;border-radius:6px;background:#4678c4;box-shadow:inset 0 0 0 1px rgba(255,255,255,0.6), 3px 5px 9px 1px rgba(0,0,0,0.6)"></div>
<div class="a" style="left:253px;top:488px;width:278px;height:28px;border-radius:5px 5px 0 0;background:linear-gradient(90deg,#9db6da 0%,#b9cde8 22%,#7fa3d6 38%,#4b7dc4 50%,#6893cf 64%,#8eb0dd 82%,#6f98d1 100%)"></div>
<div class="a" style="left:253px;top:488px;width:278px;height:8px;border-radius:5px 5px 0 0;background:linear-gradient(180deg,rgba(255,255,255,0.35),rgba(255,255,255,0))"></div>
<div class="a" style="left:253px;top:516px;width:6px;height:40px;background:linear-gradient(180deg,#b8cce8,#e4eef9 60%,#7ea4d8)"></div>
<div class="a" style="left:527px;top:516px;width:4px;height:40px;background:linear-gradient(180deg,#b8cce8,#e4eef9 60%,#7ea4d8)"></div>
<div class="a" style="left:258px;top:515px;width:269px;height:120px;border:1px solid rgba(255,255,255,0.55);"></div>
<div class="a" style="left:259px;top:516px;width:267px;height:118px;background:#f0f0f0;border:1px solid #22324a;"></div>
<div class="a" style="left:260px;top:517px;width:265px;height:67px;background:#fff;"></div>
<div class="a" style="left:478px;top:487px;width:47px;height:21px;border:1px solid #4a2a2a;border-top:none;border-radius:0 0 4px 4px;background:linear-gradient(180deg,#e6a294 0%,#d4786a 40%,#b83a26 60%,#c45a44 100%)"></div>
<svg class="a" style="left:490px;top:489px;" width="22" height="18" viewBox="490 489 22 18"><path d="M498.5 494.5 L506 501 M506 494.5 L498.5 501" stroke="#3a2020" stroke-width="4.2" stroke-linecap="square"/><path d="M498.5 494.5 L506 501 M506 494.5 L498.5 501" stroke="#fff" stroke-width="2.2" stroke-linecap="square"/></svg>
<div class="t" style="left:260.70px;top:496.57px;font-size:11.5px;color:#000;transform:scaleX(1.0299);transform-origin:0 0;">Microsoft Excel</div>
<div class="t" style="left:272.60px;top:545.07px;font-size:11.5px;color:#000;transform:scaleX(1.0447);transform-origin:0 0;">Command Button of the Form is Clicked</div>
<div class="a" style="left:428px;top:596px;width:88px;height:26px;border:1px solid #646464;background:#f0f0f0;box-shadow:inset 1px 1px 0 #fff, inset -1px -1px 0 #888, inset -2px -2px 0 #b0b0b0"></div>
<div class="t" style="left:464.80px;top:603.77px;font-size:11.5px;color:#000;transform:scaleX(0.9179);transform-origin:0 0;">OK</div>
<svg class="a" style="left:100px;top:250px;" width="1000" height="450" viewBox="100 250 1000 450">
 <path d="M160.5 262 L201.3 303.5 H181.7 V344.4 H139.5 V303.5 H119.7 Z" fill="none" stroke="#ed1c24" stroke-width="4.4" stroke-linejoin="miter"/>
 <path d="M548.4 392.5 H618.7 V372 L686 414 L618.7 456 V435.2 H548.4 Z" fill="none" stroke="#ed1c24" stroke-width="4.5"/>
 <path d="M535.5 570.3 L609.8 528.5 V548.5 H685.4 V591.5 H609.8 V611 Z" fill="none" stroke="#ed1c24" stroke-width="4.5"/>
</svg>
<svg class="a" style="left:585px;top:672px;" width="20" height="25" viewBox="585 672 20 25"><path d="M588.5 675.5 V691 L592 687.5 L595 693.5 L597.2 692.5 L594.5 686.5 H599.5 Z" fill="#fff" stroke="#111" stroke-width="1.1" stroke-linejoin="round"/></svg>
</body></html>
